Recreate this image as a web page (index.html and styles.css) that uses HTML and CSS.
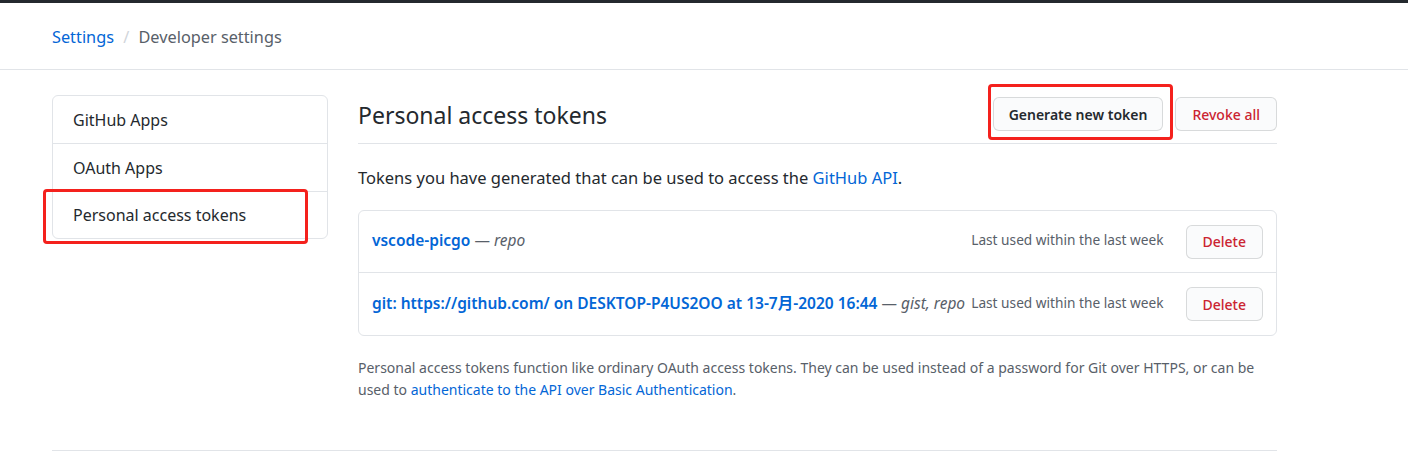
FILE: index.html
```html
<!DOCTYPE html>
<html>
<head>
<meta charset="utf-8">
<link rel="stylesheet" href="styles.css">
</head>
<body>
<div class="topbar"></div>
<header class="crumbs">
  <div class="container">
    <a class="crumb-link" href="#">Settings</a>
    <span class="sep">/</span>
    <span class="crumb-current">Developer settings</span>
  </div>
</header>
<div class="container layout">
  <nav class="menu">
    <a class="menu-item" href="#">GitHub Apps</a>
    <a class="menu-item" href="#">OAuth Apps</a>
    <a class="menu-item" href="#">Personal access tokens</a>
  </nav>
  <main class="content">
    <div class="subhead">
      <h2 class="subhead-title">Personal access tokens</h2>
      <div class="subhead-actions">
        <button class="btn btn-gen">Generate new token</button>
        <button class="btn btn-danger">Revoke all</button>
      </div>
    </div>
    <p class="lead">Tokens you have generated that can be used to access the <a href="#">GitHub API</a>.</p>
    <div class="box">
      <div class="box-row">
        <div class="token"><a href="#" class="token-name">vscode-picgo</a> <span class="scopes">— <em>repo</em></span></div>
        <div class="last-used">Last used within the last week</div>
        <button class="btn btn-sm btn-danger">Delete</button>
      </div>
      <div class="box-row">
        <div class="token"><a href="#" class="token-name">git: https://github.com/ on DESKTOP-P4US2OO at 13-7月-2020 16:44</a> <span class="scopes">— <em>gist, repo</em></span></div>
        <div class="last-used">Last used within the last week</div>
        <button class="btn btn-sm btn-danger">Delete</button>
      </div>
    </div>
    <p class="note">Personal access tokens function like ordinary OAuth access tokens. They can be used instead of a password for Git over HTTPS, or can be used to <a href="#">authenticate to the API over Basic Authentication</a>.</p>
  </main>
</div>
<div class="container footer-line"></div>
<div class="mark mark-side"></div>
<div class="mark mark-gen"></div>
</body>
</html>
```
FILE: styles.css
```css
* { box-sizing: border-box; }
html, body { margin: 0; padding: 0; background: #fff; }
body {
  font-family: "Noto Sans", "Noto Sans CJK SC", sans-serif;
  color: #24292e;
  font-size: 14px;
  position: relative;
  height: 467px;
  overflow: hidden;
}
a { color: #0366d6; text-decoration: none; }
.topbar { height: 3px; background: #24292e; }
.container { margin-left: 52px; width: 1225px; }
.crumbs {
  height: 67px;
  border-bottom: 1px solid #e1e4e8;
  display: flex;
  align-items: center;
}
.crumbs .container { font-size: 16.3px; padding-top: 1px; }
.crumb-link { color: #0366d6; }
.sep { color: #d1d5da; margin: 0 5px; }
.crumb-current { color: #586069; }

.layout { display: flex; gap: 30px; padding-top: 25px; }
.menu {
  width: 276px;
  flex: none;
  border: 1px solid #e1e4e8;
  border-radius: 6px;
  align-self: flex-start;
  display: flex;
  flex-direction: column;
}
.menu-item {
  height: 48px;
  display: flex;
  align-items: center;
  padding-left: 20px;
  padding-top: 0;
  font-size: 16px;
  color: #24292e;
  border-bottom: 1px solid #e1e4e8;
}
.menu-item:last-child { border-bottom: none; height: 46px; }

.content { flex: 1; }
.subhead {
  display: flex;
  align-items: flex-start;
  justify-content: space-between;
  height: 49px;
  border-bottom: 1px solid #e1e4e8;
}
.subhead-title { margin: 0; font-size: 23px; font-weight: 400; line-height: 34px; padding-top: 3px; }
.subhead-actions { display: flex; gap: 12px; padding-top: 2px; }
.btn {
  font-family: inherit;
  font-size: 14px;
  font-weight: 600;
  color: #24292e;
  background: #fafbfc;
  border: 1px solid rgba(27,31,35,.15);
  border-radius: 6px;
  height: 34px;
  padding: 0 16px;
  cursor: pointer;
}
.btn-gen { padding: 0 15px; }
.btn-danger { color: #cb2431; font-weight: 500; }
.btn-sm { height: 34px; padding: 0 16px; }
.lead { margin: 22px 0 20px; font-size: 16.5px; line-height: 24px; }
.box { border: 1px solid #e1e4e8; border-radius: 6px; }
.box-row {
  display: flex;
  align-items: center;
  height: 62px;
  padding: 0 13px 0 13px;
  border-bottom: 1px solid #e1e4e8;
}
.box-row:last-child { border-bottom: none; height: 62px; }
.token { flex: 1; white-space: nowrap; font-size: 15.5px; padding-bottom: 3px; }
.token-name { font-weight: 600; }
.scopes { color: #586069; }
.last-used { color: #586069; font-size: 13.7px; margin-right: 22px; padding-bottom: 4px; white-space: nowrap; }
.note { margin: 21px 0 0; color: #586069; font-size: 14px; line-height: 22px; }
.footer-line { border-top: 1px solid #e1e4e8; margin-top: 49px; }

.mark {
  position: absolute;
  border: 3px solid #f4211d;
  border-radius: 4px;
}
.mark-side { left: 43px; top: 189px; width: 265px; height: 55px; }
.mark-gen { left: 988px; top: 84px; width: 185px; height: 56px; }
```
